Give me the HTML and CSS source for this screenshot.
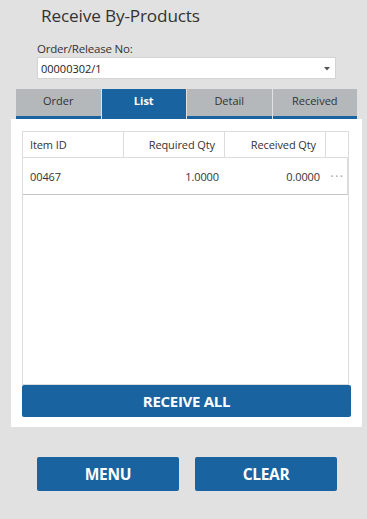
FILE: index.html
```html
<!DOCTYPE html>
<html lang="en">
<head>
  <meta charset="UTF-8">
  <title>Receive By-Products</title>
  <link rel="stylesheet" href="styles.css">
</head>
<body>
<div class="screen">
  <h1 class="title">Receive By-Products</h1>

  <div class="field">
    <label class="field-label">Order/Release No:</label>
    <div class="select">
      <span>00000302/1</span>
      <svg class="caret" width="6" height="4" viewBox="0 0 6 4"><path d="M0 0 L6 0 L3 3.5 Z" fill="#555"/></svg>
    </div>
  </div>

  <div class="tabs">
    <div class="tab">Order</div>
    <div class="tab active">List</div>
    <div class="tab">Detail</div>
    <div class="tab">Received</div>
  </div>

  <div class="panel">
    <div class="grid">
      <div class="grid-row grid-head">
        <div class="cell c-id">Item ID</div>
        <div class="cell c-num">Required Qty</div>
        <div class="cell c-num">Received Qty</div>
        <div class="cell c-more"></div>
      </div>
      <div class="grid-row grid-data">
        <div class="cell c-id">00467</div>
        <div class="cell c-num">1.0000</div>
        <div class="cell c-num">0.0000</div>
        <div class="cell c-more">&middot;&middot;&middot;</div>
      </div>
      <div class="grid-fill"></div>
    </div>
    <button class="button wide">RECEIVE ALL</button>
  </div>

  <div class="actions">
    <button class="button">MENU</button>
    <button class="button">CLEAR</button>
  </div>
</div>
</body>
</html>
```

FILE: styles.css
```css
* {
  box-sizing: border-box;
  margin: 0;
  padding: 0;
}

body {
  font-family: "Open Sans", "Noto Sans", sans-serif;
  background-color: #e1e1e1;
  color: #333;
  width: 367px;
  height: 519px;
  overflow: hidden;
}

.screen {
  padding-top: 4px;
}

.title {
  font-size: 17.2px;
  font-weight: normal;
  color: #333;
  padding-left: 41px;
  height: 26px;
  line-height: 24px;
  letter-spacing: -0.15px;
}

.field {
  padding: 12px 31px 0 37px;
}

.field-label {
  display: block;
  font-size: 11.5px;
  color: #333;
  height: 14px;
  line-height: 14px;
  letter-spacing: -0.2px;
}

.select {
  display: flex;
  align-items: center;
  justify-content: space-between;
  height: 22px;
  margin-top: 1px;
  padding: 0 5px 0 3px;
  background: #fff;
  border: 1px solid #d4d4d4;
  font-size: 11px;
  color: #222;
}

.caret {
  margin-top: 2px;
}

.tabs {
  display: flex;
  gap: 1px;
  margin: 10px 10px 0 16px;
  height: 30px;
}

.tab {
  flex: 1;
  background: #b4b8bb;
  border-bottom: 3px solid #1863a0;
  font-size: 11px;
  color: #333;
  text-align: center;
  line-height: 23px;
}

.tab.active {
  background: #1863a0;
  color: #fff;
  font-weight: bold;
}

.panel {
  background: #fff;
  margin: 0 5px 0 11px;
  padding: 12px 11px 10px 11px;
}

.grid {
  height: 254px;
  margin-right: 2px;
  border: 1px solid #dcdcdc;
  display: flex;
  flex-direction: column;
}

.grid-row {
  display: flex;
}

.grid-head {
  height: 26px;
  border-bottom: 1px solid #dcdcdc;
}

.grid-data {
  height: 37px;
  border-bottom: 1px solid #c6c6c6;
  border-right: 1px solid #dcdcdc;
}

.cell {
  font-size: 11px;
  color: #333;
  display: flex;
  align-items: center;
  letter-spacing: -0.1px;
}

.c-id {
  width: 101px;
  padding-left: 7px;
  border-right: 1px solid #dcdcdc;
}

.c-num {
  width: 101px;
  justify-content: flex-end;
  padding-right: 9px;
  border-right: 1px solid #dcdcdc;
}

.grid-data .c-id,
.grid-data .c-num {
  border-right-color: transparent;
}

.grid-data .c-num {
  padding-right: 5px;
}

.c-more {
  flex: 1;
  justify-content: center;
  color: #999;
  font-size: 12px;
  letter-spacing: 1.5px;
  padding-left: 2px;
}

.grid-fill {
  flex: 1;
}

.button {
  display: block;
  font-family: "Open Sans", "Noto Sans", sans-serif;
  font-size: 15px;
  font-weight: bold;
  color: #fff;
  background-color: #1863a0;
  border: none;
  border-radius: 2px;
  letter-spacing: -0.3px;
  cursor: pointer;
}

.button.wide {
  width: 100%;
  height: 32px;
}

.actions {
  display: flex;
  gap: 16px;
  padding: 30px 0 0 37px;
}

.actions .button {
  width: 142px;
  height: 34px;
  font-size: 15.5px;
}
```
